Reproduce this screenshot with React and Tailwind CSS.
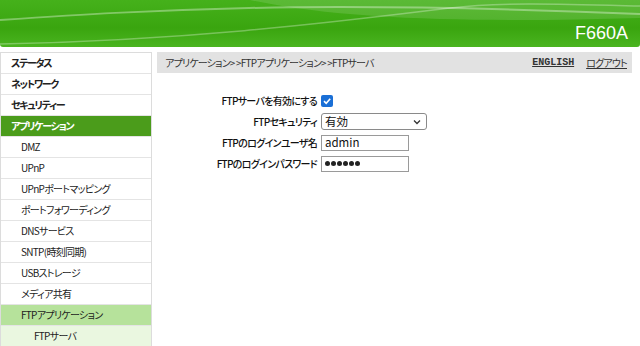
import React from 'react';

const font = { fontFamily: '"Noto Sans CJK JP", "Liberation Sans", sans-serif', fontFeatureSettings: '"palt"' };

const menu = [
    { label: 'ステータス', level: 0 },
    { label: 'ネットワーク', level: 0 },
    { label: 'セキュリティー', level: 0 },
    { label: 'アプリケーション', level: 0, active: true },
    { label: 'DMZ', level: 1 },
    { label: 'UPnP', level: 1 },
    { label: 'UPnPポートマッピング', level: 1 },
    { label: 'ポートフォワーディング', level: 1 },
    { label: 'DNSサービス', level: 1 },
    { label: 'SNTP(時刻同期)', level: 1 },
    { label: 'USBストレージ', level: 1 },
    { label: 'メディア共有', level: 1 },
    { label: 'FTPアプリケーション', level: 1, current: true },
    { label: 'FTPサーバ', level: 2 },
];

const Header = () => (
    <div className="relative h-[47px] w-full overflow-hidden rounded-b-[3px] bg-[linear-gradient(to_bottom,#45b11b,#3aa50f_60%,#4ab420)]">
        <svg className="absolute inset-0" width="640" height="47" viewBox="0 0 640 47">
            <path d="M250 0 C 350 22, 500 22, 640 18 L640 0 Z" fill="#ffffff" fillOpacity="0.12" />
            <path d="M0 20 C 150 10, 300 0, 640 14" stroke="#ffffff" strokeOpacity="0.35" strokeWidth="2" fill="none" />
            <path d="M0 44 C 200 40, 350 20, 450 8 C 500 2, 560 4, 640 6" stroke="#ffffff" strokeOpacity="0.3" strokeWidth="1.5" fill="none" />
        </svg>
        <span className="absolute right-[12px] top-[23px] text-[18px] leading-[20px] text-white" style={{ fontFamily: '"Liberation Sans", Arial, sans-serif' }}>
            F660A
        </span>
    </div>
);

const Sidebar = () => (
    <div className="w-[152px] shrink-0 border border-b-0 border-[#dcdcdc] bg-white">
        {menu.map((m) => {
            let cls = 'bg-white text-[#222]';
            if (m.active) cls = 'bg-[#4b9c1b] text-white';
            else if (m.current) cls = 'bg-[#b6e29b] text-[#222]';
            else if (m.level === 2) cls = 'bg-[#eaf7e0] text-[#222]';
            const pad = m.level === 0 ? 'pl-[10px] font-bold tracking-[-1.3px]' : m.level === 1 ? 'pl-[20px] tracking-[-0.7px]' : 'pl-[33px] tracking-[-0.7px]';
            return (
                <div key={m.label} className={`h-[21px] border-b border-[#e4e4e4] text-[10px] leading-[20px] ${cls} ${pad}`}>
                    {m.label}
                </div>
            );
        })}
    </div>
);

const App = () => {
    return (
        <div className="h-[346px] w-[640px] overflow-hidden bg-white" style={font}>
            <Header />
            <div className="mt-[5px] flex gap-[5px]">
                <Sidebar />
                <div className="w-[475px]">
                    <div className="flex h-[21px] items-center justify-between bg-[#e2e2e2] pl-[8px] pr-[5px] text-[10px] text-[#333]">
                        <span className="tracking-[-0.8px]">アプリケーション&gt; &gt;FTPアプリケーション&gt; &gt;FTPサーバ</span>
                        <div className="flex gap-[12px]">
                            <span className="font-bold underline" style={{ fontFamily: '"Liberation Mono", monospace' }}>ENGLISH</span>
                            <span className="tracking-[-0.8px] underline">ログアウト</span>
                        </div>
                    </div>
                    <div className="mt-[17px] grid grid-cols-[160px_1fr] gap-x-[4px] text-[10px] tracking-[-0.7px] text-[#111]">
                        <div className="h-[21px] text-right font-medium leading-[21px]">FTPサーバを有効にする</div>
                        <div className="flex h-[21px] items-center">
                            <span className="flex h-[12px] w-[12px] items-center justify-center rounded-[2px] bg-[#1a6fd6]">
                                <svg width="10" height="10" viewBox="0 0 10 10">
                                    <path d="M2 5.2 L4.2 7.3 L8.2 2.8" stroke="#fff" strokeWidth="1.6" fill="none" />
                                </svg>
                            </span>
                        </div>
                        <div className="h-[21px] text-right font-medium leading-[21px]">FTPセキュリティ</div>
                        <div className="flex h-[21px] items-center">
                            <div className="flex h-[17px] w-[106px] items-center justify-between rounded-[3px] border border-[#8a8a8a] bg-white pl-[3px] pr-[5px] text-[11.5px] tracking-normal">
                                <span>有効</span>
                                <svg width="8" height="6" viewBox="0 0 8 6">
                                    <path d="M1 1.5 L4 4.5 L7 1.5" stroke="#333" strokeWidth="1.3" fill="none" />
                                </svg>
                            </div>
                        </div>
                        <div className="h-[21px] text-right font-medium leading-[21px]">FTPのログインユーザ名</div>
                        <div className="flex h-[21px] items-center">
                            <div className="flex h-[16px] w-[88px] items-center border border-[#9a9a9a] bg-white pl-[3px] text-[11.5px] tracking-normal">admin</div>
                        </div>
                        <div className="h-[21px] text-right font-medium leading-[21px]">FTPのログインパスワード</div>
                        <div className="flex h-[21px] items-center">
                            <div className="flex h-[16px] w-[88px] items-center gap-[1px] border border-[#9a9a9a] bg-white pl-[3px]">
                                {[0, 1, 2, 3, 4, 5].map((i) => (
                                    <span key={i} className="h-[5px] w-[5px] rounded-full bg-[#222]" />
                                ))}
                            </div>
                        </div>
                    </div>
                </div>
            </div>
        </div>
    );
};

export default App;
